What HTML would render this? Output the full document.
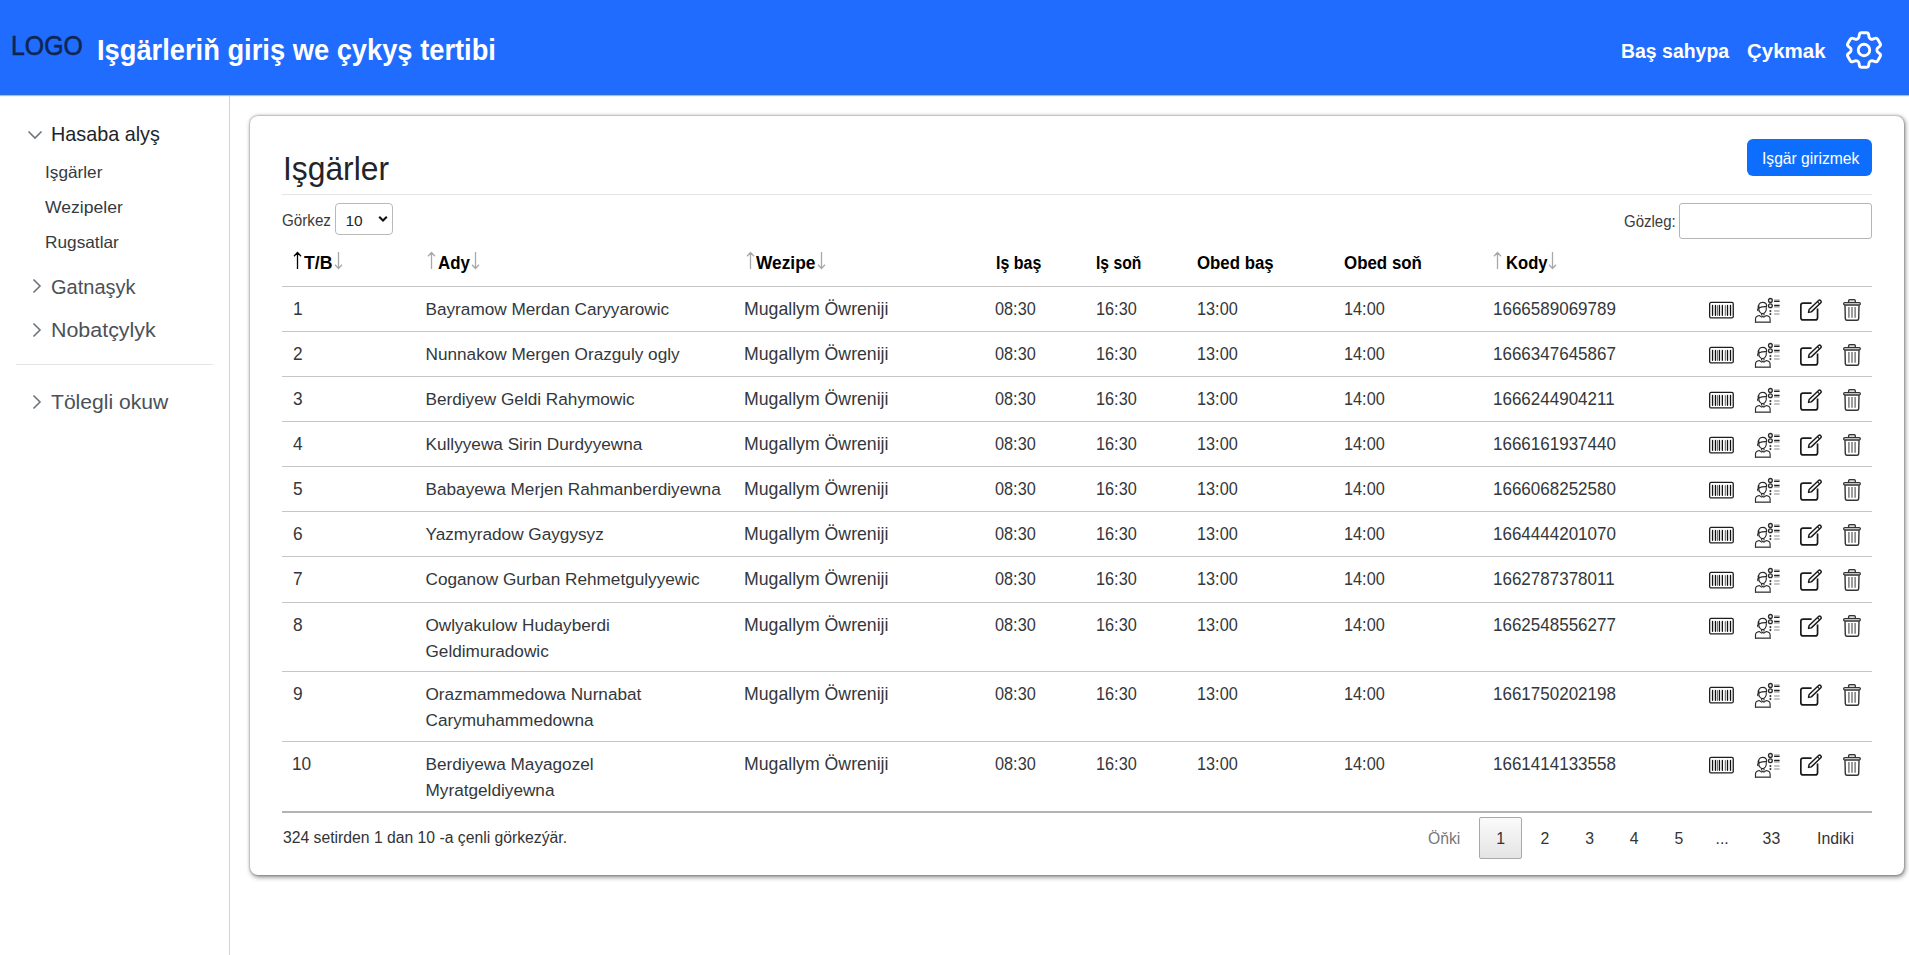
<!DOCTYPE html>
<html><head><meta charset="utf-8"><title>Işgärler</title><style>
*{margin:0;padding:0;box-sizing:content-box}
html,body{width:1909px;height:955px;overflow:hidden;background:#fff}
body{position:relative;font-family:"Liberation Sans",sans-serif}
.t{position:absolute;white-space:nowrap}
.ab{position:absolute}
.nav{position:absolute;left:0;top:0;width:1909px;height:94px;background:#206cfe}
.card{position:absolute;left:250px;top:116px;width:1654px;height:759px;border-radius:8px;background:#fff;box-shadow:0 0 2px rgba(0,0,0,.42),1px 1.5px 5px rgba(0,0,0,.5)}
.btn{position:absolute;left:1747px;top:139px;width:125px;height:37px;border-radius:6px;background:#0d6efd}
.pg1{left:1479px;top:817px;width:41px;height:40px;border:1px solid #a9a9a9;border-radius:2px;background:linear-gradient(to bottom,#fbfbfb 0%,#e4e4e4 100%)}
</style></head>
<body>
<div class="nav"></div><div class="ab" style="left:0;top:94px;width:1909px;height:1px;background:#2c6bd8"></div><div class="ab" style="left:0;top:95px;width:1909px;height:1px;background:#9dbcf0"></div><div class="ab" style="left:0;top:96px;width:1909px;height:1px;background:#eef5ff"></div>
<div class="t " style="left:10.5px;top:29px;font-size:28.4px;line-height:32px;font-weight:400;color:#0f2552;transform:scaleX(.875);transform-origin:0 0;-webkit-text-stroke:.55px #0f2552">LOGO</div>
<div class="t " style="left:97.0px;top:33.6px;font-size:29px;line-height:32px;font-weight:700;color:#fff;transform:scaleX(0.9411);transform-origin:0 0">Işgärleriň giriş we çykyş tertibi</div>
<div class="t " style="left:1620.9px;top:40px;font-size:20px;line-height:22px;font-weight:700;color:#fff;transform:scaleX(0.9722);transform-origin:0 0">Baş sahypa</div>
<div class="t " style="left:1746.7px;top:40px;font-size:20px;line-height:22px;font-weight:700;color:#fff;transform:scaleX(1.0247);transform-origin:0 0">Çykmak</div>
<svg class="ab" style="left:1841px;top:27px" width="46" height="46" viewBox="0 0 24 24" fill="none" stroke="#fff" stroke-width="1.5" stroke-linecap="round" stroke-linejoin="round"><path d="M9.594 3.94c.09-.542.56-.94 1.11-.94h2.593c.55 0 1.02.398 1.11.94l.213 1.281c.063.374.313.686.645.87.074.04.147.083.22.127.325.196.72.257 1.075.124l1.217-.456a1.125 1.125 0 011.37.49l1.296 2.247a1.125 1.125 0 01-.26 1.431l-1.003.827c-.293.241-.438.613-.43.992a7.723 7.723 0 010 .255c-.008.378.137.75.43.991l1.004.827c.424.35.534.955.26 1.43l-1.298 2.247a1.125 1.125 0 01-1.369.491l-1.217-.456c-.355-.133-.75-.072-1.076.124a6.47 6.47 0 01-.22.128c-.331.183-.581.495-.644.869l-.213 1.281c-.09.543-.56.94-1.11.94h-2.594c-.55 0-1.019-.398-1.11-.94l-.213-1.281c-.062-.374-.312-.686-.644-.87a6.52 6.52 0 01-.22-.127c-.325-.196-.72-.257-1.076-.124l-1.217.456a1.125 1.125 0 01-1.369-.49l-1.297-2.247a1.125 1.125 0 01.26-1.431l1.004-.827c.292-.24.437-.613.43-.991a6.932 6.932 0 010-.255c.007-.38-.138-.751-.43-.992l-1.004-.827a1.125 1.125 0 01-.26-1.43l1.297-2.247a1.125 1.125 0 011.37-.491l1.216.456c.356.133.751.072 1.076-.124.072-.044.146-.086.22-.128.332-.183.582-.495.644-.869l.214-1.28z"/><path d="M15 12a3 3 0 11-6 0 3 3 0 016 0z"/></svg>
<div class="ab" style="left:229px;top:96px;width:1px;height:859px;background:#d2d2d2"></div>
<svg class="ab" style="left:26.5px;top:129.5px" width="16" height="10" viewBox="0 0 16 10"><path d="M1.5 1.5 L8 8 L14.5 1.5" fill="none" stroke="#6c757d" stroke-width="1.6"/></svg>
<div class="t " style="left:51.4px;top:121.6px;font-size:21px;line-height:23px;font-weight:400;color:#212529;transform:scaleX(0.9420);transform-origin:0 0">Hasaba alyş</div>
<div class="t " style="left:44.8px;top:162.5px;font-size:16.5px;line-height:18px;font-weight:400;color:#343a40;transform:scaleX(1.0431);transform-origin:0 0">Işgärler</div>
<div class="t " style="left:44.8px;top:197.9px;font-size:16.5px;line-height:18px;font-weight:400;color:#343a40;transform:scaleX(1.0644);transform-origin:0 0">Wezipeler</div>
<div class="t " style="left:44.8px;top:233.2px;font-size:16.5px;line-height:18px;font-weight:400;color:#343a40;transform:scaleX(1.0450);transform-origin:0 0">Rugsatlar</div>
<svg class="ab" style="left:32px;top:278px" width="10" height="16" viewBox="0 0 10 16"><path d="M1.5 1.5 L8 8 L1.5 14.5" fill="none" stroke="#6c757d" stroke-width="1.6"/></svg>
<div class="t " style="left:51.0px;top:274.5px;font-size:20.5px;line-height:23px;font-weight:400;color:#4b5157;transform:scaleX(0.9768);transform-origin:0 0">Gatnaşyk</div>
<svg class="ab" style="left:32px;top:321.5px" width="10" height="16" viewBox="0 0 10 16"><path d="M1.5 1.5 L8 8 L1.5 14.5" fill="none" stroke="#6c757d" stroke-width="1.6"/></svg>
<div class="t " style="left:51.0px;top:317.7px;font-size:20.5px;line-height:23px;font-weight:400;color:#4b5157;transform:scaleX(1.0444);transform-origin:0 0">Nobatçylyk</div>
<div class="ab" style="left:16px;top:364px;width:197px;height:1px;background:#e2e4e7"></div>
<svg class="ab" style="left:32px;top:393.5px" width="10" height="16" viewBox="0 0 10 16"><path d="M1.5 1.5 L8 8 L1.5 14.5" fill="none" stroke="#6c757d" stroke-width="1.6"/></svg>
<div class="t " style="left:51.0px;top:389.8px;font-size:20.5px;line-height:23px;font-weight:400;color:#4b5157;transform:scaleX(1.0291);transform-origin:0 0">Tölegli okuw</div>
<div class="card"></div>
<div class="t " style="left:283.3px;top:150.6px;font-size:32.5px;line-height:36px;font-weight:400;color:#212529;transform:scaleX(0.9780);transform-origin:0 0">Işgärler</div>
<div class="ab" style="left:282px;top:194px;width:1590px;height:1px;background:#e2e4e7"></div>
<div class="btn"></div>
<div class="t " style="left:1761.6px;top:149.9px;font-size:16px;line-height:17px;font-weight:400;color:#fff;transform:scaleX(0.9771);transform-origin:0 0">Işgär girizmek</div>
<div class="t " style="left:282.0px;top:211.7px;font-size:16px;line-height:17px;font-weight:400;color:#3a3a3a;transform:scaleX(0.9496);transform-origin:0 0">Görkez</div>
<div class="ab" style="left:335px;top:203px;width:56px;height:30px;border:1px solid #b9b9b9;border-radius:4px;background:#fff"></div>
<div class="t " style="left:345.5px;top:211.5px;font-size:15.5px;line-height:17px;font-weight:400;color:#212529;">10</div>
<svg class="ab" style="left:377px;top:213px" width="12" height="12" viewBox="0 0 12 12"><path d="M2.2 3.8 L6 7.6 L9.8 3.8" fill="none" stroke="#111" stroke-width="2.1"/></svg>
<div class="t " style="left:1623.7px;top:212.9px;font-size:16px;line-height:17px;font-weight:400;color:#3a3a3a;transform:scaleX(0.9361);transform-origin:0 0">Gözleg:</div>
<div class="ab" style="left:1679px;top:203px;width:191px;height:34px;border:1px solid #b5b5b5;border-radius:3px;background:#fff"></div>
<svg class="ab" style="left:293px;top:251px" width="9" height="19" viewBox="0 0 9 19"><path d="M4.5 1.5 V18 M1 5.2 L4.5 1.5 L8 5.2" fill="none" stroke="#000" stroke-width="1.3"/></svg>
<div class="t " style="left:304.0px;top:252.5px;font-size:18px;line-height:20px;font-weight:700;color:#000;transform:scaleX(0.9800);transform-origin:0 0">T/B</div>
<svg class="ab" style="left:333.5px;top:251px" width="9" height="19" viewBox="0 0 9 19"><path d="M4.5 1 V17.5 M1 13.8 L4.5 17.5 L8 13.8" fill="none" stroke="#a8a8a8" stroke-width="1.3"/></svg>
<svg class="ab" style="left:427px;top:251px" width="9" height="19" viewBox="0 0 9 19"><path d="M4.5 1.5 V18 M1 5.2 L4.5 1.5 L8 5.2" fill="none" stroke="#a8a8a8" stroke-width="1.3"/></svg>
<div class="t " style="left:437.7px;top:252.5px;font-size:18px;line-height:20px;font-weight:700;color:#000;transform:scaleX(0.9377);transform-origin:0 0">Ady</div>
<svg class="ab" style="left:471px;top:251px" width="9" height="19" viewBox="0 0 9 19"><path d="M4.5 1 V17.5 M1 13.8 L4.5 17.5 L8 13.8" fill="none" stroke="#a8a8a8" stroke-width="1.3"/></svg>
<svg class="ab" style="left:745.5px;top:251px" width="9" height="19" viewBox="0 0 9 19"><path d="M4.5 1.5 V18 M1 5.2 L4.5 1.5 L8 5.2" fill="none" stroke="#a8a8a8" stroke-width="1.3"/></svg>
<div class="t " style="left:756.2px;top:252.5px;font-size:18px;line-height:20px;font-weight:700;color:#000;transform:scaleX(0.9635);transform-origin:0 0">Wezipe</div>
<svg class="ab" style="left:817px;top:251px" width="9" height="19" viewBox="0 0 9 19"><path d="M4.5 1 V17.5 M1 13.8 L4.5 17.5 L8 13.8" fill="none" stroke="#a8a8a8" stroke-width="1.3"/></svg>
<div class="t " style="left:995.6px;top:252.5px;font-size:18px;line-height:20px;font-weight:700;color:#000;transform:scaleX(0.8877);transform-origin:0 0">Iş baş</div>
<div class="t " style="left:1096.0px;top:252.5px;font-size:18px;line-height:20px;font-weight:700;color:#000;transform:scaleX(0.8708);transform-origin:0 0">Iş soň</div>
<div class="t " style="left:1197.2px;top:252.5px;font-size:18px;line-height:20px;font-weight:700;color:#000;transform:scaleX(0.9343);transform-origin:0 0">Obed baş</div>
<div class="t " style="left:1343.9px;top:252.5px;font-size:18px;line-height:20px;font-weight:700;color:#000;transform:scaleX(0.9388);transform-origin:0 0">Obed soň</div>
<svg class="ab" style="left:1493px;top:251px" width="9" height="19" viewBox="0 0 9 19"><path d="M4.5 1.5 V18 M1 5.2 L4.5 1.5 L8 5.2" fill="none" stroke="#a8a8a8" stroke-width="1.3"/></svg>
<div class="t " style="left:1505.5px;top:252.5px;font-size:18px;line-height:20px;font-weight:700;color:#000;transform:scaleX(0.9222);transform-origin:0 0">Kody</div>
<svg class="ab" style="left:1548px;top:251px" width="9" height="19" viewBox="0 0 9 19"><path d="M4.5 1 V17.5 M1 13.8 L4.5 17.5 L8 13.8" fill="none" stroke="#a8a8a8" stroke-width="1.3"/></svg>
<div class="ab" style="left:282px;top:286px;width:1590px;height:1px;background:#c4c4c4"></div>
<div class="t " style="left:292.5px;top:298.5px;font-size:18.2px;line-height:20px;font-weight:400;color:#33373b;transform:scaleX(.95);transform-origin:0 0">1</div>
<div class="t " style="left:425.5px;top:298.5px;font-size:17.2px;line-height:20px;font-weight:400;color:#33373b;">Bayramow Merdan Caryyarowic</div>
<div class="t " style="left:744px;top:298.5px;font-size:17.7px;line-height:20px;font-weight:400;color:#33373b;">Mugallym Öwreniji</div>
<div class="t " style="left:994.5px;top:298.5px;font-size:18.2px;line-height:20px;font-weight:400;color:#33373b;transform:scaleX(.895);transform-origin:0 0">08:30</div>
<div class="t " style="left:1095.5px;top:298.5px;font-size:18.2px;line-height:20px;font-weight:400;color:#33373b;transform:scaleX(.895);transform-origin:0 0">16:30</div>
<div class="t " style="left:1197px;top:298.5px;font-size:18.2px;line-height:20px;font-weight:400;color:#33373b;transform:scaleX(.895);transform-origin:0 0">13:00</div>
<div class="t " style="left:1344px;top:298.5px;font-size:18.2px;line-height:20px;font-weight:400;color:#33373b;transform:scaleX(.895);transform-origin:0 0">14:00</div>
<div class="t " style="left:1493px;top:298.5px;font-size:18.2px;line-height:20px;font-weight:400;color:#33373b;transform:scaleX(.935);transform-origin:0 0">1666589069789</div>
<svg class="ab" style="left:1708px;top:301px" width="27" height="19" viewBox="0 0 27 19"><rect x="1.65" y="1.45" width="23.6" height="15.5" rx="1.5" fill="none" stroke="#1e1e1e" stroke-width="1.3"/><g stroke="#111" stroke-width="1.3" stroke-linecap="round"><path d="M4.55 4.5v9.8M7.45 4.5v9.8M11.45 4.5v9.8M14.35 4.5v9.8M19.5 4.5v9.8M22.5 4.5v9.8"/></g><g stroke="#777" stroke-width="1.2" stroke-linecap="round"><path d="M9.45 4.5v9.8M17.35 4.5v9.8"/></g></svg>
<svg class="ab" style="left:1754px;top:297px" width="27" height="27" viewBox="0 0 27 27" fill="none" stroke="#2a2a2a" stroke-width="1.15"><path d="M4.5 11.6c-1.2 0-1.3 2.1.1 2.3"/><path d="M4.8 10.2c-.3 3.7 1.3 6.4 3.8 6.4s4-2.7 3.7-6.4"/><path d="M4.6 11.4c-.7-3.6 1-6.1 4-6.1s4.4 1.9 3.9 4.3c-2.5-.1-5.4.3-7.8 1.4" stroke-width="1.25"/><path d="M4.5 8.6v3" stroke-width="1.6"/><path d="M7.6 16.4v2.2M10 16.4v2.2"/><path d="M1.5 25.3v-3.3c0-2 1.4-3.1 3.9-3.5l2.3 1.6l1.1-.8l1.1.8l2.3-1.6c2.5.4 3.9 1.5 3.9 3.5v3.3z"/><path d="M1.6 25.2h14.7" stroke="#666" stroke-width="1.3"/><circle cx="16.4" cy="3.4" r="1.9" stroke-width="1.3" fill="#eee"/><circle cx="16.4" cy="8.7" r="1.9" stroke-width="1.3" fill="#eee"/><circle cx="16.4" cy="14.1" r="1.05" fill="#3a3a3a" stroke="none"/><circle cx="16.4" cy="17.1" r="1.05" fill="#3a3a3a" stroke="none"/><g stroke="#222" stroke-width="1.1"><path d="M20.1 4.4h5.5M20.1 8.4h5.5"/></g><g stroke="#8a8a8a" stroke-width="1.2"><path d="M20.1 3.1h5.5M20.1 9.8h5.5M20.1 14.0h5.5M20.1 17.0h5.5"/></g></svg>
<svg class="ab" style="left:1799px;top:298px" width="25" height="24" viewBox="0 0 25 24" fill="none" stroke="#1a1a1a" stroke-width="1.7" stroke-linejoin="round"><path d="M12.6 5.05H4.1C2.7 5.05 1.85 5.9 1.85 7.3v12.4c0 1.4.85 2.25 2.25 2.25h12.2c1.4 0 2.25-.85 2.25-2.25V10.6"/><g transform="translate(9.5 14.4) rotate(-44)"><path d="M0 0L2.4-1.6H15.6Q16.9-1.6 16.9-.4V.4Q16.9 1.6 15.6 1.6H2.4Z" stroke-width="1.45"/><path d="M13.9-1.5V1.5" stroke-width="1.1"/></g></svg>
<svg class="ab" style="left:1842px;top:298px" width="21" height="24" viewBox="0 0 21 24" fill="none" stroke="#333" stroke-width="1.3"><path d="M6.6 4.6V2.8c0-.7.4-1.1 1.1-1.1h4.5c.7 0 1.1.4 1.1 1.1v1.8" fill="#ddd"/><rect x="1.65" y="4.7" width="16.7" height="2.3" rx="1.15" fill="#f4f4f4"/><path d="M2.6 7.3H17.4" stroke="#666" stroke-width="1.2"/><path d="M3.0 7.2L3.3 20.6c.1 1.2.7 1.6 1.7 1.6h10c1 0 1.6-.4 1.7-1.6L17.0 7.2" stroke-width="1.4"/><g stroke="#666" stroke-width="1.3"><path d="M6.9 8.9v10.8M10 8.9v10.8M13.1 8.9v10.8"/></g></svg>
<div class="ab" style="left:282px;top:331px;width:1590px;height:1px;background:#c6c6c6"></div>
<div class="t " style="left:292.5px;top:343.5px;font-size:18.2px;line-height:20px;font-weight:400;color:#33373b;transform:scaleX(.95);transform-origin:0 0">2</div>
<div class="t " style="left:425.5px;top:343.5px;font-size:17.2px;line-height:20px;font-weight:400;color:#33373b;">Nunnakow Mergen Orazguly ogly</div>
<div class="t " style="left:744px;top:343.5px;font-size:17.7px;line-height:20px;font-weight:400;color:#33373b;">Mugallym Öwreniji</div>
<div class="t " style="left:994.5px;top:343.5px;font-size:18.2px;line-height:20px;font-weight:400;color:#33373b;transform:scaleX(.895);transform-origin:0 0">08:30</div>
<div class="t " style="left:1095.5px;top:343.5px;font-size:18.2px;line-height:20px;font-weight:400;color:#33373b;transform:scaleX(.895);transform-origin:0 0">16:30</div>
<div class="t " style="left:1197px;top:343.5px;font-size:18.2px;line-height:20px;font-weight:400;color:#33373b;transform:scaleX(.895);transform-origin:0 0">13:00</div>
<div class="t " style="left:1344px;top:343.5px;font-size:18.2px;line-height:20px;font-weight:400;color:#33373b;transform:scaleX(.895);transform-origin:0 0">14:00</div>
<div class="t " style="left:1493px;top:343.5px;font-size:18.2px;line-height:20px;font-weight:400;color:#33373b;transform:scaleX(.935);transform-origin:0 0">1666347645867</div>
<svg class="ab" style="left:1708px;top:346px" width="27" height="19" viewBox="0 0 27 19"><rect x="1.65" y="1.45" width="23.6" height="15.5" rx="1.5" fill="none" stroke="#1e1e1e" stroke-width="1.3"/><g stroke="#111" stroke-width="1.3" stroke-linecap="round"><path d="M4.55 4.5v9.8M7.45 4.5v9.8M11.45 4.5v9.8M14.35 4.5v9.8M19.5 4.5v9.8M22.5 4.5v9.8"/></g><g stroke="#777" stroke-width="1.2" stroke-linecap="round"><path d="M9.45 4.5v9.8M17.35 4.5v9.8"/></g></svg>
<svg class="ab" style="left:1754px;top:342px" width="27" height="27" viewBox="0 0 27 27" fill="none" stroke="#2a2a2a" stroke-width="1.15"><path d="M4.5 11.6c-1.2 0-1.3 2.1.1 2.3"/><path d="M4.8 10.2c-.3 3.7 1.3 6.4 3.8 6.4s4-2.7 3.7-6.4"/><path d="M4.6 11.4c-.7-3.6 1-6.1 4-6.1s4.4 1.9 3.9 4.3c-2.5-.1-5.4.3-7.8 1.4" stroke-width="1.25"/><path d="M4.5 8.6v3" stroke-width="1.6"/><path d="M7.6 16.4v2.2M10 16.4v2.2"/><path d="M1.5 25.3v-3.3c0-2 1.4-3.1 3.9-3.5l2.3 1.6l1.1-.8l1.1.8l2.3-1.6c2.5.4 3.9 1.5 3.9 3.5v3.3z"/><path d="M1.6 25.2h14.7" stroke="#666" stroke-width="1.3"/><circle cx="16.4" cy="3.4" r="1.9" stroke-width="1.3" fill="#eee"/><circle cx="16.4" cy="8.7" r="1.9" stroke-width="1.3" fill="#eee"/><circle cx="16.4" cy="14.1" r="1.05" fill="#3a3a3a" stroke="none"/><circle cx="16.4" cy="17.1" r="1.05" fill="#3a3a3a" stroke="none"/><g stroke="#222" stroke-width="1.1"><path d="M20.1 4.4h5.5M20.1 8.4h5.5"/></g><g stroke="#8a8a8a" stroke-width="1.2"><path d="M20.1 3.1h5.5M20.1 9.8h5.5M20.1 14.0h5.5M20.1 17.0h5.5"/></g></svg>
<svg class="ab" style="left:1799px;top:343px" width="25" height="24" viewBox="0 0 25 24" fill="none" stroke="#1a1a1a" stroke-width="1.7" stroke-linejoin="round"><path d="M12.6 5.05H4.1C2.7 5.05 1.85 5.9 1.85 7.3v12.4c0 1.4.85 2.25 2.25 2.25h12.2c1.4 0 2.25-.85 2.25-2.25V10.6"/><g transform="translate(9.5 14.4) rotate(-44)"><path d="M0 0L2.4-1.6H15.6Q16.9-1.6 16.9-.4V.4Q16.9 1.6 15.6 1.6H2.4Z" stroke-width="1.45"/><path d="M13.9-1.5V1.5" stroke-width="1.1"/></g></svg>
<svg class="ab" style="left:1842px;top:343px" width="21" height="24" viewBox="0 0 21 24" fill="none" stroke="#333" stroke-width="1.3"><path d="M6.6 4.6V2.8c0-.7.4-1.1 1.1-1.1h4.5c.7 0 1.1.4 1.1 1.1v1.8" fill="#ddd"/><rect x="1.65" y="4.7" width="16.7" height="2.3" rx="1.15" fill="#f4f4f4"/><path d="M2.6 7.3H17.4" stroke="#666" stroke-width="1.2"/><path d="M3.0 7.2L3.3 20.6c.1 1.2.7 1.6 1.7 1.6h10c1 0 1.6-.4 1.7-1.6L17.0 7.2" stroke-width="1.4"/><g stroke="#666" stroke-width="1.3"><path d="M6.9 8.9v10.8M10 8.9v10.8M13.1 8.9v10.8"/></g></svg>
<div class="ab" style="left:282px;top:376px;width:1590px;height:1px;background:#c6c6c6"></div>
<div class="t " style="left:292.5px;top:388.5px;font-size:18.2px;line-height:20px;font-weight:400;color:#33373b;transform:scaleX(.95);transform-origin:0 0">3</div>
<div class="t " style="left:425.5px;top:388.5px;font-size:17.2px;line-height:20px;font-weight:400;color:#33373b;">Berdiyew Geldi Rahymowic</div>
<div class="t " style="left:744px;top:388.5px;font-size:17.7px;line-height:20px;font-weight:400;color:#33373b;">Mugallym Öwreniji</div>
<div class="t " style="left:994.5px;top:388.5px;font-size:18.2px;line-height:20px;font-weight:400;color:#33373b;transform:scaleX(.895);transform-origin:0 0">08:30</div>
<div class="t " style="left:1095.5px;top:388.5px;font-size:18.2px;line-height:20px;font-weight:400;color:#33373b;transform:scaleX(.895);transform-origin:0 0">16:30</div>
<div class="t " style="left:1197px;top:388.5px;font-size:18.2px;line-height:20px;font-weight:400;color:#33373b;transform:scaleX(.895);transform-origin:0 0">13:00</div>
<div class="t " style="left:1344px;top:388.5px;font-size:18.2px;line-height:20px;font-weight:400;color:#33373b;transform:scaleX(.895);transform-origin:0 0">14:00</div>
<div class="t " style="left:1493px;top:388.5px;font-size:18.2px;line-height:20px;font-weight:400;color:#33373b;transform:scaleX(.935);transform-origin:0 0">1666244904211</div>
<svg class="ab" style="left:1708px;top:391px" width="27" height="19" viewBox="0 0 27 19"><rect x="1.65" y="1.45" width="23.6" height="15.5" rx="1.5" fill="none" stroke="#1e1e1e" stroke-width="1.3"/><g stroke="#111" stroke-width="1.3" stroke-linecap="round"><path d="M4.55 4.5v9.8M7.45 4.5v9.8M11.45 4.5v9.8M14.35 4.5v9.8M19.5 4.5v9.8M22.5 4.5v9.8"/></g><g stroke="#777" stroke-width="1.2" stroke-linecap="round"><path d="M9.45 4.5v9.8M17.35 4.5v9.8"/></g></svg>
<svg class="ab" style="left:1754px;top:387px" width="27" height="27" viewBox="0 0 27 27" fill="none" stroke="#2a2a2a" stroke-width="1.15"><path d="M4.5 11.6c-1.2 0-1.3 2.1.1 2.3"/><path d="M4.8 10.2c-.3 3.7 1.3 6.4 3.8 6.4s4-2.7 3.7-6.4"/><path d="M4.6 11.4c-.7-3.6 1-6.1 4-6.1s4.4 1.9 3.9 4.3c-2.5-.1-5.4.3-7.8 1.4" stroke-width="1.25"/><path d="M4.5 8.6v3" stroke-width="1.6"/><path d="M7.6 16.4v2.2M10 16.4v2.2"/><path d="M1.5 25.3v-3.3c0-2 1.4-3.1 3.9-3.5l2.3 1.6l1.1-.8l1.1.8l2.3-1.6c2.5.4 3.9 1.5 3.9 3.5v3.3z"/><path d="M1.6 25.2h14.7" stroke="#666" stroke-width="1.3"/><circle cx="16.4" cy="3.4" r="1.9" stroke-width="1.3" fill="#eee"/><circle cx="16.4" cy="8.7" r="1.9" stroke-width="1.3" fill="#eee"/><circle cx="16.4" cy="14.1" r="1.05" fill="#3a3a3a" stroke="none"/><circle cx="16.4" cy="17.1" r="1.05" fill="#3a3a3a" stroke="none"/><g stroke="#222" stroke-width="1.1"><path d="M20.1 4.4h5.5M20.1 8.4h5.5"/></g><g stroke="#8a8a8a" stroke-width="1.2"><path d="M20.1 3.1h5.5M20.1 9.8h5.5M20.1 14.0h5.5M20.1 17.0h5.5"/></g></svg>
<svg class="ab" style="left:1799px;top:388px" width="25" height="24" viewBox="0 0 25 24" fill="none" stroke="#1a1a1a" stroke-width="1.7" stroke-linejoin="round"><path d="M12.6 5.05H4.1C2.7 5.05 1.85 5.9 1.85 7.3v12.4c0 1.4.85 2.25 2.25 2.25h12.2c1.4 0 2.25-.85 2.25-2.25V10.6"/><g transform="translate(9.5 14.4) rotate(-44)"><path d="M0 0L2.4-1.6H15.6Q16.9-1.6 16.9-.4V.4Q16.9 1.6 15.6 1.6H2.4Z" stroke-width="1.45"/><path d="M13.9-1.5V1.5" stroke-width="1.1"/></g></svg>
<svg class="ab" style="left:1842px;top:388px" width="21" height="24" viewBox="0 0 21 24" fill="none" stroke="#333" stroke-width="1.3"><path d="M6.6 4.6V2.8c0-.7.4-1.1 1.1-1.1h4.5c.7 0 1.1.4 1.1 1.1v1.8" fill="#ddd"/><rect x="1.65" y="4.7" width="16.7" height="2.3" rx="1.15" fill="#f4f4f4"/><path d="M2.6 7.3H17.4" stroke="#666" stroke-width="1.2"/><path d="M3.0 7.2L3.3 20.6c.1 1.2.7 1.6 1.7 1.6h10c1 0 1.6-.4 1.7-1.6L17.0 7.2" stroke-width="1.4"/><g stroke="#666" stroke-width="1.3"><path d="M6.9 8.9v10.8M10 8.9v10.8M13.1 8.9v10.8"/></g></svg>
<div class="ab" style="left:282px;top:421px;width:1590px;height:1px;background:#c6c6c6"></div>
<div class="t " style="left:292.5px;top:433.5px;font-size:18.2px;line-height:20px;font-weight:400;color:#33373b;transform:scaleX(.95);transform-origin:0 0">4</div>
<div class="t " style="left:425.5px;top:433.5px;font-size:17.2px;line-height:20px;font-weight:400;color:#33373b;">Kullyyewa Sirin Durdyyewna</div>
<div class="t " style="left:744px;top:433.5px;font-size:17.7px;line-height:20px;font-weight:400;color:#33373b;">Mugallym Öwreniji</div>
<div class="t " style="left:994.5px;top:433.5px;font-size:18.2px;line-height:20px;font-weight:400;color:#33373b;transform:scaleX(.895);transform-origin:0 0">08:30</div>
<div class="t " style="left:1095.5px;top:433.5px;font-size:18.2px;line-height:20px;font-weight:400;color:#33373b;transform:scaleX(.895);transform-origin:0 0">16:30</div>
<div class="t " style="left:1197px;top:433.5px;font-size:18.2px;line-height:20px;font-weight:400;color:#33373b;transform:scaleX(.895);transform-origin:0 0">13:00</div>
<div class="t " style="left:1344px;top:433.5px;font-size:18.2px;line-height:20px;font-weight:400;color:#33373b;transform:scaleX(.895);transform-origin:0 0">14:00</div>
<div class="t " style="left:1493px;top:433.5px;font-size:18.2px;line-height:20px;font-weight:400;color:#33373b;transform:scaleX(.935);transform-origin:0 0">1666161937440</div>
<svg class="ab" style="left:1708px;top:436px" width="27" height="19" viewBox="0 0 27 19"><rect x="1.65" y="1.45" width="23.6" height="15.5" rx="1.5" fill="none" stroke="#1e1e1e" stroke-width="1.3"/><g stroke="#111" stroke-width="1.3" stroke-linecap="round"><path d="M4.55 4.5v9.8M7.45 4.5v9.8M11.45 4.5v9.8M14.35 4.5v9.8M19.5 4.5v9.8M22.5 4.5v9.8"/></g><g stroke="#777" stroke-width="1.2" stroke-linecap="round"><path d="M9.45 4.5v9.8M17.35 4.5v9.8"/></g></svg>
<svg class="ab" style="left:1754px;top:432px" width="27" height="27" viewBox="0 0 27 27" fill="none" stroke="#2a2a2a" stroke-width="1.15"><path d="M4.5 11.6c-1.2 0-1.3 2.1.1 2.3"/><path d="M4.8 10.2c-.3 3.7 1.3 6.4 3.8 6.4s4-2.7 3.7-6.4"/><path d="M4.6 11.4c-.7-3.6 1-6.1 4-6.1s4.4 1.9 3.9 4.3c-2.5-.1-5.4.3-7.8 1.4" stroke-width="1.25"/><path d="M4.5 8.6v3" stroke-width="1.6"/><path d="M7.6 16.4v2.2M10 16.4v2.2"/><path d="M1.5 25.3v-3.3c0-2 1.4-3.1 3.9-3.5l2.3 1.6l1.1-.8l1.1.8l2.3-1.6c2.5.4 3.9 1.5 3.9 3.5v3.3z"/><path d="M1.6 25.2h14.7" stroke="#666" stroke-width="1.3"/><circle cx="16.4" cy="3.4" r="1.9" stroke-width="1.3" fill="#eee"/><circle cx="16.4" cy="8.7" r="1.9" stroke-width="1.3" fill="#eee"/><circle cx="16.4" cy="14.1" r="1.05" fill="#3a3a3a" stroke="none"/><circle cx="16.4" cy="17.1" r="1.05" fill="#3a3a3a" stroke="none"/><g stroke="#222" stroke-width="1.1"><path d="M20.1 4.4h5.5M20.1 8.4h5.5"/></g><g stroke="#8a8a8a" stroke-width="1.2"><path d="M20.1 3.1h5.5M20.1 9.8h5.5M20.1 14.0h5.5M20.1 17.0h5.5"/></g></svg>
<svg class="ab" style="left:1799px;top:433px" width="25" height="24" viewBox="0 0 25 24" fill="none" stroke="#1a1a1a" stroke-width="1.7" stroke-linejoin="round"><path d="M12.6 5.05H4.1C2.7 5.05 1.85 5.9 1.85 7.3v12.4c0 1.4.85 2.25 2.25 2.25h12.2c1.4 0 2.25-.85 2.25-2.25V10.6"/><g transform="translate(9.5 14.4) rotate(-44)"><path d="M0 0L2.4-1.6H15.6Q16.9-1.6 16.9-.4V.4Q16.9 1.6 15.6 1.6H2.4Z" stroke-width="1.45"/><path d="M13.9-1.5V1.5" stroke-width="1.1"/></g></svg>
<svg class="ab" style="left:1842px;top:433px" width="21" height="24" viewBox="0 0 21 24" fill="none" stroke="#333" stroke-width="1.3"><path d="M6.6 4.6V2.8c0-.7.4-1.1 1.1-1.1h4.5c.7 0 1.1.4 1.1 1.1v1.8" fill="#ddd"/><rect x="1.65" y="4.7" width="16.7" height="2.3" rx="1.15" fill="#f4f4f4"/><path d="M2.6 7.3H17.4" stroke="#666" stroke-width="1.2"/><path d="M3.0 7.2L3.3 20.6c.1 1.2.7 1.6 1.7 1.6h10c1 0 1.6-.4 1.7-1.6L17.0 7.2" stroke-width="1.4"/><g stroke="#666" stroke-width="1.3"><path d="M6.9 8.9v10.8M10 8.9v10.8M13.1 8.9v10.8"/></g></svg>
<div class="ab" style="left:282px;top:466px;width:1590px;height:1px;background:#c6c6c6"></div>
<div class="t " style="left:292.5px;top:478.5px;font-size:18.2px;line-height:20px;font-weight:400;color:#33373b;transform:scaleX(.95);transform-origin:0 0">5</div>
<div class="t " style="left:425.5px;top:478.5px;font-size:17.2px;line-height:20px;font-weight:400;color:#33373b;">Babayewa Merjen Rahmanberdiyewna</div>
<div class="t " style="left:744px;top:478.5px;font-size:17.7px;line-height:20px;font-weight:400;color:#33373b;">Mugallym Öwreniji</div>
<div class="t " style="left:994.5px;top:478.5px;font-size:18.2px;line-height:20px;font-weight:400;color:#33373b;transform:scaleX(.895);transform-origin:0 0">08:30</div>
<div class="t " style="left:1095.5px;top:478.5px;font-size:18.2px;line-height:20px;font-weight:400;color:#33373b;transform:scaleX(.895);transform-origin:0 0">16:30</div>
<div class="t " style="left:1197px;top:478.5px;font-size:18.2px;line-height:20px;font-weight:400;color:#33373b;transform:scaleX(.895);transform-origin:0 0">13:00</div>
<div class="t " style="left:1344px;top:478.5px;font-size:18.2px;line-height:20px;font-weight:400;color:#33373b;transform:scaleX(.895);transform-origin:0 0">14:00</div>
<div class="t " style="left:1493px;top:478.5px;font-size:18.2px;line-height:20px;font-weight:400;color:#33373b;transform:scaleX(.935);transform-origin:0 0">1666068252580</div>
<svg class="ab" style="left:1708px;top:481px" width="27" height="19" viewBox="0 0 27 19"><rect x="1.65" y="1.45" width="23.6" height="15.5" rx="1.5" fill="none" stroke="#1e1e1e" stroke-width="1.3"/><g stroke="#111" stroke-width="1.3" stroke-linecap="round"><path d="M4.55 4.5v9.8M7.45 4.5v9.8M11.45 4.5v9.8M14.35 4.5v9.8M19.5 4.5v9.8M22.5 4.5v9.8"/></g><g stroke="#777" stroke-width="1.2" stroke-linecap="round"><path d="M9.45 4.5v9.8M17.35 4.5v9.8"/></g></svg>
<svg class="ab" style="left:1754px;top:477px" width="27" height="27" viewBox="0 0 27 27" fill="none" stroke="#2a2a2a" stroke-width="1.15"><path d="M4.5 11.6c-1.2 0-1.3 2.1.1 2.3"/><path d="M4.8 10.2c-.3 3.7 1.3 6.4 3.8 6.4s4-2.7 3.7-6.4"/><path d="M4.6 11.4c-.7-3.6 1-6.1 4-6.1s4.4 1.9 3.9 4.3c-2.5-.1-5.4.3-7.8 1.4" stroke-width="1.25"/><path d="M4.5 8.6v3" stroke-width="1.6"/><path d="M7.6 16.4v2.2M10 16.4v2.2"/><path d="M1.5 25.3v-3.3c0-2 1.4-3.1 3.9-3.5l2.3 1.6l1.1-.8l1.1.8l2.3-1.6c2.5.4 3.9 1.5 3.9 3.5v3.3z"/><path d="M1.6 25.2h14.7" stroke="#666" stroke-width="1.3"/><circle cx="16.4" cy="3.4" r="1.9" stroke-width="1.3" fill="#eee"/><circle cx="16.4" cy="8.7" r="1.9" stroke-width="1.3" fill="#eee"/><circle cx="16.4" cy="14.1" r="1.05" fill="#3a3a3a" stroke="none"/><circle cx="16.4" cy="17.1" r="1.05" fill="#3a3a3a" stroke="none"/><g stroke="#222" stroke-width="1.1"><path d="M20.1 4.4h5.5M20.1 8.4h5.5"/></g><g stroke="#8a8a8a" stroke-width="1.2"><path d="M20.1 3.1h5.5M20.1 9.8h5.5M20.1 14.0h5.5M20.1 17.0h5.5"/></g></svg>
<svg class="ab" style="left:1799px;top:478px" width="25" height="24" viewBox="0 0 25 24" fill="none" stroke="#1a1a1a" stroke-width="1.7" stroke-linejoin="round"><path d="M12.6 5.05H4.1C2.7 5.05 1.85 5.9 1.85 7.3v12.4c0 1.4.85 2.25 2.25 2.25h12.2c1.4 0 2.25-.85 2.25-2.25V10.6"/><g transform="translate(9.5 14.4) rotate(-44)"><path d="M0 0L2.4-1.6H15.6Q16.9-1.6 16.9-.4V.4Q16.9 1.6 15.6 1.6H2.4Z" stroke-width="1.45"/><path d="M13.9-1.5V1.5" stroke-width="1.1"/></g></svg>
<svg class="ab" style="left:1842px;top:478px" width="21" height="24" viewBox="0 0 21 24" fill="none" stroke="#333" stroke-width="1.3"><path d="M6.6 4.6V2.8c0-.7.4-1.1 1.1-1.1h4.5c.7 0 1.1.4 1.1 1.1v1.8" fill="#ddd"/><rect x="1.65" y="4.7" width="16.7" height="2.3" rx="1.15" fill="#f4f4f4"/><path d="M2.6 7.3H17.4" stroke="#666" stroke-width="1.2"/><path d="M3.0 7.2L3.3 20.6c.1 1.2.7 1.6 1.7 1.6h10c1 0 1.6-.4 1.7-1.6L17.0 7.2" stroke-width="1.4"/><g stroke="#666" stroke-width="1.3"><path d="M6.9 8.9v10.8M10 8.9v10.8M13.1 8.9v10.8"/></g></svg>
<div class="ab" style="left:282px;top:511px;width:1590px;height:1px;background:#c6c6c6"></div>
<div class="t " style="left:292.5px;top:523.5px;font-size:18.2px;line-height:20px;font-weight:400;color:#33373b;transform:scaleX(.95);transform-origin:0 0">6</div>
<div class="t " style="left:425.5px;top:523.5px;font-size:17.2px;line-height:20px;font-weight:400;color:#33373b;">Yazmyradow Gaygysyz</div>
<div class="t " style="left:744px;top:523.5px;font-size:17.7px;line-height:20px;font-weight:400;color:#33373b;">Mugallym Öwreniji</div>
<div class="t " style="left:994.5px;top:523.5px;font-size:18.2px;line-height:20px;font-weight:400;color:#33373b;transform:scaleX(.895);transform-origin:0 0">08:30</div>
<div class="t " style="left:1095.5px;top:523.5px;font-size:18.2px;line-height:20px;font-weight:400;color:#33373b;transform:scaleX(.895);transform-origin:0 0">16:30</div>
<div class="t " style="left:1197px;top:523.5px;font-size:18.2px;line-height:20px;font-weight:400;color:#33373b;transform:scaleX(.895);transform-origin:0 0">13:00</div>
<div class="t " style="left:1344px;top:523.5px;font-size:18.2px;line-height:20px;font-weight:400;color:#33373b;transform:scaleX(.895);transform-origin:0 0">14:00</div>
<div class="t " style="left:1493px;top:523.5px;font-size:18.2px;line-height:20px;font-weight:400;color:#33373b;transform:scaleX(.935);transform-origin:0 0">1664444201070</div>
<svg class="ab" style="left:1708px;top:526px" width="27" height="19" viewBox="0 0 27 19"><rect x="1.65" y="1.45" width="23.6" height="15.5" rx="1.5" fill="none" stroke="#1e1e1e" stroke-width="1.3"/><g stroke="#111" stroke-width="1.3" stroke-linecap="round"><path d="M4.55 4.5v9.8M7.45 4.5v9.8M11.45 4.5v9.8M14.35 4.5v9.8M19.5 4.5v9.8M22.5 4.5v9.8"/></g><g stroke="#777" stroke-width="1.2" stroke-linecap="round"><path d="M9.45 4.5v9.8M17.35 4.5v9.8"/></g></svg>
<svg class="ab" style="left:1754px;top:522px" width="27" height="27" viewBox="0 0 27 27" fill="none" stroke="#2a2a2a" stroke-width="1.15"><path d="M4.5 11.6c-1.2 0-1.3 2.1.1 2.3"/><path d="M4.8 10.2c-.3 3.7 1.3 6.4 3.8 6.4s4-2.7 3.7-6.4"/><path d="M4.6 11.4c-.7-3.6 1-6.1 4-6.1s4.4 1.9 3.9 4.3c-2.5-.1-5.4.3-7.8 1.4" stroke-width="1.25"/><path d="M4.5 8.6v3" stroke-width="1.6"/><path d="M7.6 16.4v2.2M10 16.4v2.2"/><path d="M1.5 25.3v-3.3c0-2 1.4-3.1 3.9-3.5l2.3 1.6l1.1-.8l1.1.8l2.3-1.6c2.5.4 3.9 1.5 3.9 3.5v3.3z"/><path d="M1.6 25.2h14.7" stroke="#666" stroke-width="1.3"/><circle cx="16.4" cy="3.4" r="1.9" stroke-width="1.3" fill="#eee"/><circle cx="16.4" cy="8.7" r="1.9" stroke-width="1.3" fill="#eee"/><circle cx="16.4" cy="14.1" r="1.05" fill="#3a3a3a" stroke="none"/><circle cx="16.4" cy="17.1" r="1.05" fill="#3a3a3a" stroke="none"/><g stroke="#222" stroke-width="1.1"><path d="M20.1 4.4h5.5M20.1 8.4h5.5"/></g><g stroke="#8a8a8a" stroke-width="1.2"><path d="M20.1 3.1h5.5M20.1 9.8h5.5M20.1 14.0h5.5M20.1 17.0h5.5"/></g></svg>
<svg class="ab" style="left:1799px;top:523px" width="25" height="24" viewBox="0 0 25 24" fill="none" stroke="#1a1a1a" stroke-width="1.7" stroke-linejoin="round"><path d="M12.6 5.05H4.1C2.7 5.05 1.85 5.9 1.85 7.3v12.4c0 1.4.85 2.25 2.25 2.25h12.2c1.4 0 2.25-.85 2.25-2.25V10.6"/><g transform="translate(9.5 14.4) rotate(-44)"><path d="M0 0L2.4-1.6H15.6Q16.9-1.6 16.9-.4V.4Q16.9 1.6 15.6 1.6H2.4Z" stroke-width="1.45"/><path d="M13.9-1.5V1.5" stroke-width="1.1"/></g></svg>
<svg class="ab" style="left:1842px;top:523px" width="21" height="24" viewBox="0 0 21 24" fill="none" stroke="#333" stroke-width="1.3"><path d="M6.6 4.6V2.8c0-.7.4-1.1 1.1-1.1h4.5c.7 0 1.1.4 1.1 1.1v1.8" fill="#ddd"/><rect x="1.65" y="4.7" width="16.7" height="2.3" rx="1.15" fill="#f4f4f4"/><path d="M2.6 7.3H17.4" stroke="#666" stroke-width="1.2"/><path d="M3.0 7.2L3.3 20.6c.1 1.2.7 1.6 1.7 1.6h10c1 0 1.6-.4 1.7-1.6L17.0 7.2" stroke-width="1.4"/><g stroke="#666" stroke-width="1.3"><path d="M6.9 8.9v10.8M10 8.9v10.8M13.1 8.9v10.8"/></g></svg>
<div class="ab" style="left:282px;top:556px;width:1590px;height:1px;background:#c6c6c6"></div>
<div class="t " style="left:292.5px;top:568.5px;font-size:18.2px;line-height:20px;font-weight:400;color:#33373b;transform:scaleX(.95);transform-origin:0 0">7</div>
<div class="t " style="left:425.5px;top:568.5px;font-size:17.2px;line-height:20px;font-weight:400;color:#33373b;">Coganow Gurban Rehmetgulyyewic</div>
<div class="t " style="left:744px;top:568.5px;font-size:17.7px;line-height:20px;font-weight:400;color:#33373b;">Mugallym Öwreniji</div>
<div class="t " style="left:994.5px;top:568.5px;font-size:18.2px;line-height:20px;font-weight:400;color:#33373b;transform:scaleX(.895);transform-origin:0 0">08:30</div>
<div class="t " style="left:1095.5px;top:568.5px;font-size:18.2px;line-height:20px;font-weight:400;color:#33373b;transform:scaleX(.895);transform-origin:0 0">16:30</div>
<div class="t " style="left:1197px;top:568.5px;font-size:18.2px;line-height:20px;font-weight:400;color:#33373b;transform:scaleX(.895);transform-origin:0 0">13:00</div>
<div class="t " style="left:1344px;top:568.5px;font-size:18.2px;line-height:20px;font-weight:400;color:#33373b;transform:scaleX(.895);transform-origin:0 0">14:00</div>
<div class="t " style="left:1493px;top:568.5px;font-size:18.2px;line-height:20px;font-weight:400;color:#33373b;transform:scaleX(.935);transform-origin:0 0">1662787378011</div>
<svg class="ab" style="left:1708px;top:571px" width="27" height="19" viewBox="0 0 27 19"><rect x="1.65" y="1.45" width="23.6" height="15.5" rx="1.5" fill="none" stroke="#1e1e1e" stroke-width="1.3"/><g stroke="#111" stroke-width="1.3" stroke-linecap="round"><path d="M4.55 4.5v9.8M7.45 4.5v9.8M11.45 4.5v9.8M14.35 4.5v9.8M19.5 4.5v9.8M22.5 4.5v9.8"/></g><g stroke="#777" stroke-width="1.2" stroke-linecap="round"><path d="M9.45 4.5v9.8M17.35 4.5v9.8"/></g></svg>
<svg class="ab" style="left:1754px;top:567px" width="27" height="27" viewBox="0 0 27 27" fill="none" stroke="#2a2a2a" stroke-width="1.15"><path d="M4.5 11.6c-1.2 0-1.3 2.1.1 2.3"/><path d="M4.8 10.2c-.3 3.7 1.3 6.4 3.8 6.4s4-2.7 3.7-6.4"/><path d="M4.6 11.4c-.7-3.6 1-6.1 4-6.1s4.4 1.9 3.9 4.3c-2.5-.1-5.4.3-7.8 1.4" stroke-width="1.25"/><path d="M4.5 8.6v3" stroke-width="1.6"/><path d="M7.6 16.4v2.2M10 16.4v2.2"/><path d="M1.5 25.3v-3.3c0-2 1.4-3.1 3.9-3.5l2.3 1.6l1.1-.8l1.1.8l2.3-1.6c2.5.4 3.9 1.5 3.9 3.5v3.3z"/><path d="M1.6 25.2h14.7" stroke="#666" stroke-width="1.3"/><circle cx="16.4" cy="3.4" r="1.9" stroke-width="1.3" fill="#eee"/><circle cx="16.4" cy="8.7" r="1.9" stroke-width="1.3" fill="#eee"/><circle cx="16.4" cy="14.1" r="1.05" fill="#3a3a3a" stroke="none"/><circle cx="16.4" cy="17.1" r="1.05" fill="#3a3a3a" stroke="none"/><g stroke="#222" stroke-width="1.1"><path d="M20.1 4.4h5.5M20.1 8.4h5.5"/></g><g stroke="#8a8a8a" stroke-width="1.2"><path d="M20.1 3.1h5.5M20.1 9.8h5.5M20.1 14.0h5.5M20.1 17.0h5.5"/></g></svg>
<svg class="ab" style="left:1799px;top:568px" width="25" height="24" viewBox="0 0 25 24" fill="none" stroke="#1a1a1a" stroke-width="1.7" stroke-linejoin="round"><path d="M12.6 5.05H4.1C2.7 5.05 1.85 5.9 1.85 7.3v12.4c0 1.4.85 2.25 2.25 2.25h12.2c1.4 0 2.25-.85 2.25-2.25V10.6"/><g transform="translate(9.5 14.4) rotate(-44)"><path d="M0 0L2.4-1.6H15.6Q16.9-1.6 16.9-.4V.4Q16.9 1.6 15.6 1.6H2.4Z" stroke-width="1.45"/><path d="M13.9-1.5V1.5" stroke-width="1.1"/></g></svg>
<svg class="ab" style="left:1842px;top:568px" width="21" height="24" viewBox="0 0 21 24" fill="none" stroke="#333" stroke-width="1.3"><path d="M6.6 4.6V2.8c0-.7.4-1.1 1.1-1.1h4.5c.7 0 1.1.4 1.1 1.1v1.8" fill="#ddd"/><rect x="1.65" y="4.7" width="16.7" height="2.3" rx="1.15" fill="#f4f4f4"/><path d="M2.6 7.3H17.4" stroke="#666" stroke-width="1.2"/><path d="M3.0 7.2L3.3 20.6c.1 1.2.7 1.6 1.7 1.6h10c1 0 1.6-.4 1.7-1.6L17.0 7.2" stroke-width="1.4"/><g stroke="#666" stroke-width="1.3"><path d="M6.9 8.9v10.8M10 8.9v10.8M13.1 8.9v10.8"/></g></svg>
<div class="ab" style="left:282px;top:602px;width:1590px;height:1px;background:#c6c6c6"></div>
<div class="t " style="left:292.5px;top:614.5px;font-size:18.2px;line-height:20px;font-weight:400;color:#33373b;transform:scaleX(.95);transform-origin:0 0">8</div>
<div class="t " style="left:425.5px;top:614.5px;font-size:17.2px;line-height:20px;font-weight:400;color:#33373b;">Owlyakulow Hudayberdi</div>
<div class="t " style="left:425.5px;top:640.8px;font-size:17.2px;line-height:20px;font-weight:400;color:#33373b;">Geldimuradowic</div>
<div class="t " style="left:744px;top:614.5px;font-size:17.7px;line-height:20px;font-weight:400;color:#33373b;">Mugallym Öwreniji</div>
<div class="t " style="left:994.5px;top:614.5px;font-size:18.2px;line-height:20px;font-weight:400;color:#33373b;transform:scaleX(.895);transform-origin:0 0">08:30</div>
<div class="t " style="left:1095.5px;top:614.5px;font-size:18.2px;line-height:20px;font-weight:400;color:#33373b;transform:scaleX(.895);transform-origin:0 0">16:30</div>
<div class="t " style="left:1197px;top:614.5px;font-size:18.2px;line-height:20px;font-weight:400;color:#33373b;transform:scaleX(.895);transform-origin:0 0">13:00</div>
<div class="t " style="left:1344px;top:614.5px;font-size:18.2px;line-height:20px;font-weight:400;color:#33373b;transform:scaleX(.895);transform-origin:0 0">14:00</div>
<div class="t " style="left:1493px;top:614.5px;font-size:18.2px;line-height:20px;font-weight:400;color:#33373b;transform:scaleX(.935);transform-origin:0 0">1662548556277</div>
<svg class="ab" style="left:1708px;top:617px" width="27" height="19" viewBox="0 0 27 19"><rect x="1.65" y="1.45" width="23.6" height="15.5" rx="1.5" fill="none" stroke="#1e1e1e" stroke-width="1.3"/><g stroke="#111" stroke-width="1.3" stroke-linecap="round"><path d="M4.55 4.5v9.8M7.45 4.5v9.8M11.45 4.5v9.8M14.35 4.5v9.8M19.5 4.5v9.8M22.5 4.5v9.8"/></g><g stroke="#777" stroke-width="1.2" stroke-linecap="round"><path d="M9.45 4.5v9.8M17.35 4.5v9.8"/></g></svg>
<svg class="ab" style="left:1754px;top:613px" width="27" height="27" viewBox="0 0 27 27" fill="none" stroke="#2a2a2a" stroke-width="1.15"><path d="M4.5 11.6c-1.2 0-1.3 2.1.1 2.3"/><path d="M4.8 10.2c-.3 3.7 1.3 6.4 3.8 6.4s4-2.7 3.7-6.4"/><path d="M4.6 11.4c-.7-3.6 1-6.1 4-6.1s4.4 1.9 3.9 4.3c-2.5-.1-5.4.3-7.8 1.4" stroke-width="1.25"/><path d="M4.5 8.6v3" stroke-width="1.6"/><path d="M7.6 16.4v2.2M10 16.4v2.2"/><path d="M1.5 25.3v-3.3c0-2 1.4-3.1 3.9-3.5l2.3 1.6l1.1-.8l1.1.8l2.3-1.6c2.5.4 3.9 1.5 3.9 3.5v3.3z"/><path d="M1.6 25.2h14.7" stroke="#666" stroke-width="1.3"/><circle cx="16.4" cy="3.4" r="1.9" stroke-width="1.3" fill="#eee"/><circle cx="16.4" cy="8.7" r="1.9" stroke-width="1.3" fill="#eee"/><circle cx="16.4" cy="14.1" r="1.05" fill="#3a3a3a" stroke="none"/><circle cx="16.4" cy="17.1" r="1.05" fill="#3a3a3a" stroke="none"/><g stroke="#222" stroke-width="1.1"><path d="M20.1 4.4h5.5M20.1 8.4h5.5"/></g><g stroke="#8a8a8a" stroke-width="1.2"><path d="M20.1 3.1h5.5M20.1 9.8h5.5M20.1 14.0h5.5M20.1 17.0h5.5"/></g></svg>
<svg class="ab" style="left:1799px;top:614px" width="25" height="24" viewBox="0 0 25 24" fill="none" stroke="#1a1a1a" stroke-width="1.7" stroke-linejoin="round"><path d="M12.6 5.05H4.1C2.7 5.05 1.85 5.9 1.85 7.3v12.4c0 1.4.85 2.25 2.25 2.25h12.2c1.4 0 2.25-.85 2.25-2.25V10.6"/><g transform="translate(9.5 14.4) rotate(-44)"><path d="M0 0L2.4-1.6H15.6Q16.9-1.6 16.9-.4V.4Q16.9 1.6 15.6 1.6H2.4Z" stroke-width="1.45"/><path d="M13.9-1.5V1.5" stroke-width="1.1"/></g></svg>
<svg class="ab" style="left:1842px;top:614px" width="21" height="24" viewBox="0 0 21 24" fill="none" stroke="#333" stroke-width="1.3"><path d="M6.6 4.6V2.8c0-.7.4-1.1 1.1-1.1h4.5c.7 0 1.1.4 1.1 1.1v1.8" fill="#ddd"/><rect x="1.65" y="4.7" width="16.7" height="2.3" rx="1.15" fill="#f4f4f4"/><path d="M2.6 7.3H17.4" stroke="#666" stroke-width="1.2"/><path d="M3.0 7.2L3.3 20.6c.1 1.2.7 1.6 1.7 1.6h10c1 0 1.6-.4 1.7-1.6L17.0 7.2" stroke-width="1.4"/><g stroke="#666" stroke-width="1.3"><path d="M6.9 8.9v10.8M10 8.9v10.8M13.1 8.9v10.8"/></g></svg>
<div class="ab" style="left:282px;top:671px;width:1590px;height:1px;background:#c6c6c6"></div>
<div class="t " style="left:292.5px;top:683.5px;font-size:18.2px;line-height:20px;font-weight:400;color:#33373b;transform:scaleX(.95);transform-origin:0 0">9</div>
<div class="t " style="left:425.5px;top:683.5px;font-size:17.2px;line-height:20px;font-weight:400;color:#33373b;">Orazmammedowa Nurnabat</div>
<div class="t " style="left:425.5px;top:709.8px;font-size:17.2px;line-height:20px;font-weight:400;color:#33373b;">Carymuhammedowna</div>
<div class="t " style="left:744px;top:683.5px;font-size:17.7px;line-height:20px;font-weight:400;color:#33373b;">Mugallym Öwreniji</div>
<div class="t " style="left:994.5px;top:683.5px;font-size:18.2px;line-height:20px;font-weight:400;color:#33373b;transform:scaleX(.895);transform-origin:0 0">08:30</div>
<div class="t " style="left:1095.5px;top:683.5px;font-size:18.2px;line-height:20px;font-weight:400;color:#33373b;transform:scaleX(.895);transform-origin:0 0">16:30</div>
<div class="t " style="left:1197px;top:683.5px;font-size:18.2px;line-height:20px;font-weight:400;color:#33373b;transform:scaleX(.895);transform-origin:0 0">13:00</div>
<div class="t " style="left:1344px;top:683.5px;font-size:18.2px;line-height:20px;font-weight:400;color:#33373b;transform:scaleX(.895);transform-origin:0 0">14:00</div>
<div class="t " style="left:1493px;top:683.5px;font-size:18.2px;line-height:20px;font-weight:400;color:#33373b;transform:scaleX(.935);transform-origin:0 0">1661750202198</div>
<svg class="ab" style="left:1708px;top:686px" width="27" height="19" viewBox="0 0 27 19"><rect x="1.65" y="1.45" width="23.6" height="15.5" rx="1.5" fill="none" stroke="#1e1e1e" stroke-width="1.3"/><g stroke="#111" stroke-width="1.3" stroke-linecap="round"><path d="M4.55 4.5v9.8M7.45 4.5v9.8M11.45 4.5v9.8M14.35 4.5v9.8M19.5 4.5v9.8M22.5 4.5v9.8"/></g><g stroke="#777" stroke-width="1.2" stroke-linecap="round"><path d="M9.45 4.5v9.8M17.35 4.5v9.8"/></g></svg>
<svg class="ab" style="left:1754px;top:682px" width="27" height="27" viewBox="0 0 27 27" fill="none" stroke="#2a2a2a" stroke-width="1.15"><path d="M4.5 11.6c-1.2 0-1.3 2.1.1 2.3"/><path d="M4.8 10.2c-.3 3.7 1.3 6.4 3.8 6.4s4-2.7 3.7-6.4"/><path d="M4.6 11.4c-.7-3.6 1-6.1 4-6.1s4.4 1.9 3.9 4.3c-2.5-.1-5.4.3-7.8 1.4" stroke-width="1.25"/><path d="M4.5 8.6v3" stroke-width="1.6"/><path d="M7.6 16.4v2.2M10 16.4v2.2"/><path d="M1.5 25.3v-3.3c0-2 1.4-3.1 3.9-3.5l2.3 1.6l1.1-.8l1.1.8l2.3-1.6c2.5.4 3.9 1.5 3.9 3.5v3.3z"/><path d="M1.6 25.2h14.7" stroke="#666" stroke-width="1.3"/><circle cx="16.4" cy="3.4" r="1.9" stroke-width="1.3" fill="#eee"/><circle cx="16.4" cy="8.7" r="1.9" stroke-width="1.3" fill="#eee"/><circle cx="16.4" cy="14.1" r="1.05" fill="#3a3a3a" stroke="none"/><circle cx="16.4" cy="17.1" r="1.05" fill="#3a3a3a" stroke="none"/><g stroke="#222" stroke-width="1.1"><path d="M20.1 4.4h5.5M20.1 8.4h5.5"/></g><g stroke="#8a8a8a" stroke-width="1.2"><path d="M20.1 3.1h5.5M20.1 9.8h5.5M20.1 14.0h5.5M20.1 17.0h5.5"/></g></svg>
<svg class="ab" style="left:1799px;top:683px" width="25" height="24" viewBox="0 0 25 24" fill="none" stroke="#1a1a1a" stroke-width="1.7" stroke-linejoin="round"><path d="M12.6 5.05H4.1C2.7 5.05 1.85 5.9 1.85 7.3v12.4c0 1.4.85 2.25 2.25 2.25h12.2c1.4 0 2.25-.85 2.25-2.25V10.6"/><g transform="translate(9.5 14.4) rotate(-44)"><path d="M0 0L2.4-1.6H15.6Q16.9-1.6 16.9-.4V.4Q16.9 1.6 15.6 1.6H2.4Z" stroke-width="1.45"/><path d="M13.9-1.5V1.5" stroke-width="1.1"/></g></svg>
<svg class="ab" style="left:1842px;top:683px" width="21" height="24" viewBox="0 0 21 24" fill="none" stroke="#333" stroke-width="1.3"><path d="M6.6 4.6V2.8c0-.7.4-1.1 1.1-1.1h4.5c.7 0 1.1.4 1.1 1.1v1.8" fill="#ddd"/><rect x="1.65" y="4.7" width="16.7" height="2.3" rx="1.15" fill="#f4f4f4"/><path d="M2.6 7.3H17.4" stroke="#666" stroke-width="1.2"/><path d="M3.0 7.2L3.3 20.6c.1 1.2.7 1.6 1.7 1.6h10c1 0 1.6-.4 1.7-1.6L17.0 7.2" stroke-width="1.4"/><g stroke="#666" stroke-width="1.3"><path d="M6.9 8.9v10.8M10 8.9v10.8M13.1 8.9v10.8"/></g></svg>
<div class="ab" style="left:282px;top:741px;width:1590px;height:1px;background:#c6c6c6"></div>
<div class="t " style="left:292px;top:753.5px;font-size:18.2px;line-height:20px;font-weight:400;color:#33373b;transform:scaleX(.95);transform-origin:0 0">10</div>
<div class="t " style="left:425.5px;top:753.5px;font-size:17.2px;line-height:20px;font-weight:400;color:#33373b;">Berdiyewa Mayagozel</div>
<div class="t " style="left:425.5px;top:779.8px;font-size:17.2px;line-height:20px;font-weight:400;color:#33373b;">Myratgeldiyewna</div>
<div class="t " style="left:744px;top:753.5px;font-size:17.7px;line-height:20px;font-weight:400;color:#33373b;">Mugallym Öwreniji</div>
<div class="t " style="left:994.5px;top:753.5px;font-size:18.2px;line-height:20px;font-weight:400;color:#33373b;transform:scaleX(.895);transform-origin:0 0">08:30</div>
<div class="t " style="left:1095.5px;top:753.5px;font-size:18.2px;line-height:20px;font-weight:400;color:#33373b;transform:scaleX(.895);transform-origin:0 0">16:30</div>
<div class="t " style="left:1197px;top:753.5px;font-size:18.2px;line-height:20px;font-weight:400;color:#33373b;transform:scaleX(.895);transform-origin:0 0">13:00</div>
<div class="t " style="left:1344px;top:753.5px;font-size:18.2px;line-height:20px;font-weight:400;color:#33373b;transform:scaleX(.895);transform-origin:0 0">14:00</div>
<div class="t " style="left:1493px;top:753.5px;font-size:18.2px;line-height:20px;font-weight:400;color:#33373b;transform:scaleX(.935);transform-origin:0 0">1661414133558</div>
<svg class="ab" style="left:1708px;top:756px" width="27" height="19" viewBox="0 0 27 19"><rect x="1.65" y="1.45" width="23.6" height="15.5" rx="1.5" fill="none" stroke="#1e1e1e" stroke-width="1.3"/><g stroke="#111" stroke-width="1.3" stroke-linecap="round"><path d="M4.55 4.5v9.8M7.45 4.5v9.8M11.45 4.5v9.8M14.35 4.5v9.8M19.5 4.5v9.8M22.5 4.5v9.8"/></g><g stroke="#777" stroke-width="1.2" stroke-linecap="round"><path d="M9.45 4.5v9.8M17.35 4.5v9.8"/></g></svg>
<svg class="ab" style="left:1754px;top:752px" width="27" height="27" viewBox="0 0 27 27" fill="none" stroke="#2a2a2a" stroke-width="1.15"><path d="M4.5 11.6c-1.2 0-1.3 2.1.1 2.3"/><path d="M4.8 10.2c-.3 3.7 1.3 6.4 3.8 6.4s4-2.7 3.7-6.4"/><path d="M4.6 11.4c-.7-3.6 1-6.1 4-6.1s4.4 1.9 3.9 4.3c-2.5-.1-5.4.3-7.8 1.4" stroke-width="1.25"/><path d="M4.5 8.6v3" stroke-width="1.6"/><path d="M7.6 16.4v2.2M10 16.4v2.2"/><path d="M1.5 25.3v-3.3c0-2 1.4-3.1 3.9-3.5l2.3 1.6l1.1-.8l1.1.8l2.3-1.6c2.5.4 3.9 1.5 3.9 3.5v3.3z"/><path d="M1.6 25.2h14.7" stroke="#666" stroke-width="1.3"/><circle cx="16.4" cy="3.4" r="1.9" stroke-width="1.3" fill="#eee"/><circle cx="16.4" cy="8.7" r="1.9" stroke-width="1.3" fill="#eee"/><circle cx="16.4" cy="14.1" r="1.05" fill="#3a3a3a" stroke="none"/><circle cx="16.4" cy="17.1" r="1.05" fill="#3a3a3a" stroke="none"/><g stroke="#222" stroke-width="1.1"><path d="M20.1 4.4h5.5M20.1 8.4h5.5"/></g><g stroke="#8a8a8a" stroke-width="1.2"><path d="M20.1 3.1h5.5M20.1 9.8h5.5M20.1 14.0h5.5M20.1 17.0h5.5"/></g></svg>
<svg class="ab" style="left:1799px;top:753px" width="25" height="24" viewBox="0 0 25 24" fill="none" stroke="#1a1a1a" stroke-width="1.7" stroke-linejoin="round"><path d="M12.6 5.05H4.1C2.7 5.05 1.85 5.9 1.85 7.3v12.4c0 1.4.85 2.25 2.25 2.25h12.2c1.4 0 2.25-.85 2.25-2.25V10.6"/><g transform="translate(9.5 14.4) rotate(-44)"><path d="M0 0L2.4-1.6H15.6Q16.9-1.6 16.9-.4V.4Q16.9 1.6 15.6 1.6H2.4Z" stroke-width="1.45"/><path d="M13.9-1.5V1.5" stroke-width="1.1"/></g></svg>
<svg class="ab" style="left:1842px;top:753px" width="21" height="24" viewBox="0 0 21 24" fill="none" stroke="#333" stroke-width="1.3"><path d="M6.6 4.6V2.8c0-.7.4-1.1 1.1-1.1h4.5c.7 0 1.1.4 1.1 1.1v1.8" fill="#ddd"/><rect x="1.65" y="4.7" width="16.7" height="2.3" rx="1.15" fill="#f4f4f4"/><path d="M2.6 7.3H17.4" stroke="#666" stroke-width="1.2"/><path d="M3.0 7.2L3.3 20.6c.1 1.2.7 1.6 1.7 1.6h10c1 0 1.6-.4 1.7-1.6L17.0 7.2" stroke-width="1.4"/><g stroke="#666" stroke-width="1.3"><path d="M6.9 8.9v10.8M10 8.9v10.8M13.1 8.9v10.8"/></g></svg>
<div class="ab" style="left:282px;top:811px;width:1590px;height:2px;background:#b3b3b3"></div>
<div class="t " style="left:282.5px;top:828.5px;font-size:16px;line-height:17px;font-weight:400;color:#333;transform:scaleX(0.9826);transform-origin:0 0">324 setirden 1 dan 10 -a çenli görkezýär.</div>
<div class="ab pg1"></div>
<div class="t " style="left:1427.7px;top:829.9px;font-size:16px;line-height:17px;font-weight:400;color:#777;transform:scaleX(0.9824);transform-origin:0 0">Öňki</div>
<div class="t" style="left:1470.6px;width:60px;text-align:center;top:829.9px;font-size:15.8px;line-height:17px;font-weight:400;color:#333">1</div>
<div class="t" style="left:1514.9px;width:60px;text-align:center;top:829.9px;font-size:15.8px;line-height:17px;font-weight:400;color:#333">2</div>
<div class="t" style="left:1559.7px;width:60px;text-align:center;top:829.9px;font-size:15.8px;line-height:17px;font-weight:400;color:#333">3</div>
<div class="t" style="left:1604.2px;width:60px;text-align:center;top:829.9px;font-size:15.8px;line-height:17px;font-weight:400;color:#333">4</div>
<div class="t" style="left:1649.0px;width:60px;text-align:center;top:829.9px;font-size:15.8px;line-height:17px;font-weight:400;color:#333">5</div>
<div class="t" style="left:1692.2px;width:60px;text-align:center;top:829.9px;font-size:15.8px;line-height:17px;font-weight:400;color:#333">...</div>
<div class="t" style="left:1741.4px;width:60px;text-align:center;top:829.9px;font-size:15.8px;line-height:17px;font-weight:400;color:#333">33</div>
<div class="t " style="left:1817.4px;top:829.9px;font-size:16px;line-height:17px;font-weight:400;color:#333;transform:scaleX(0.9904);transform-origin:0 0">Indiki</div>
</body></html>
